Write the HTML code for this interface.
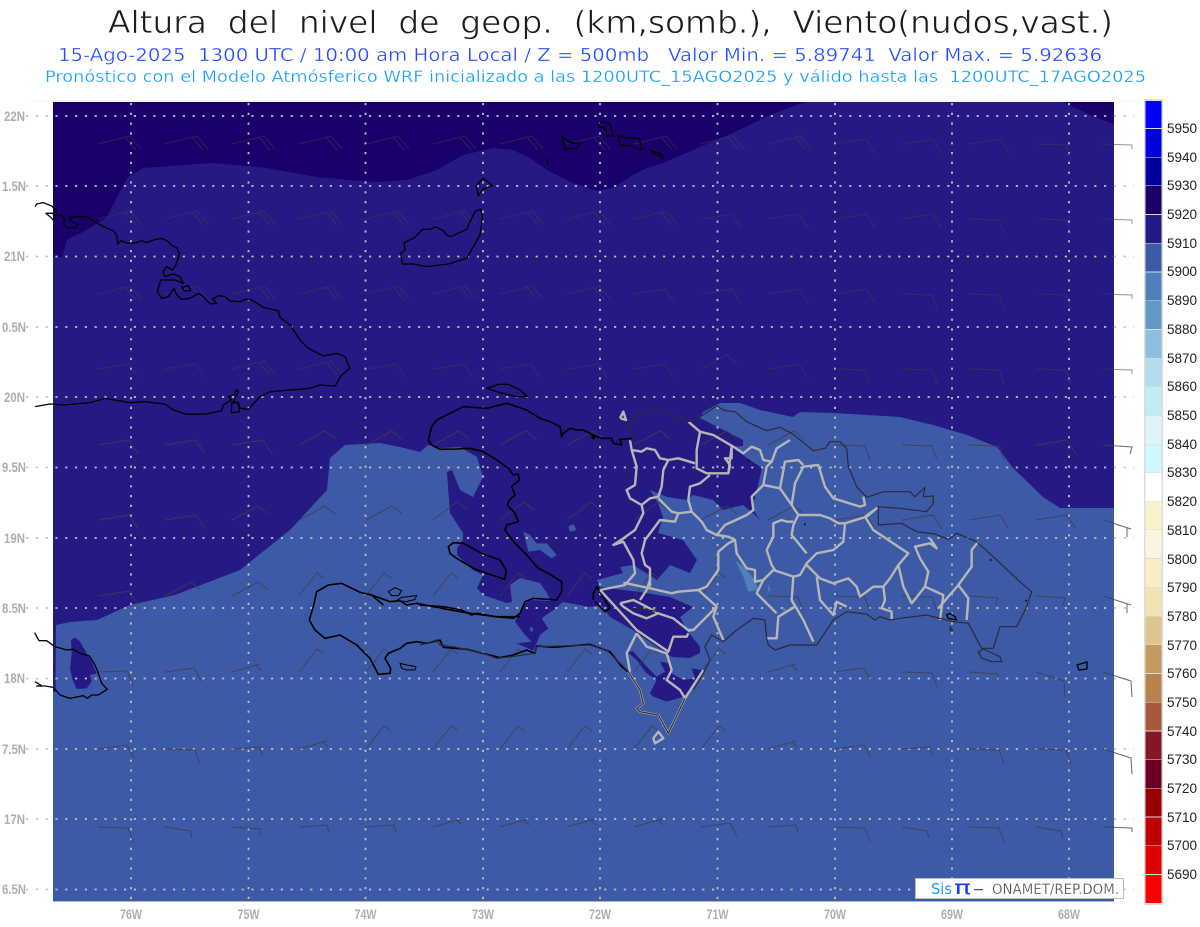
<!DOCTYPE html>
<html lang="es">
<head>
<meta charset="utf-8">
<title>Altura del nivel de geop.</title>
<style>
html,body{margin:0;padding:0;background:#fff;width:1200px;height:927px;overflow:hidden}
svg{display:block}
text{font-family:"Liberation Sans",sans-serif}
.tt{font-family:"DejaVu Sans",sans-serif;white-space:pre}
.k{fill:none;stroke:#000;stroke-width:1.3;stroke-linejoin:round;vector-effect:non-scaling-stroke}
.k2{fill:none;stroke:#2a2a3a;stroke-width:1.2;stroke-linejoin:round;vector-effect:non-scaling-stroke}
.g{fill:none;stroke:#b6b6b6;stroke-width:2.4;stroke-linejoin:round;vector-effect:non-scaling-stroke}
.b{fill:none;stroke:#3f3f4c;stroke-width:1}
.gr{fill:none;stroke:#c0c0c0;stroke-width:1.8;stroke-dasharray:2.2 7.6}
.lb{font-size:14px;fill:#aeaeae;font-weight:bold}
.cb{font-size:13.5px;fill:#222}
</style>
</head>
<body>
<svg width="1200" height="927" viewBox="0 0 1200 927" xmlns="http://www.w3.org/2000/svg">
<defs>
<path id="a" class="b" d="M0 0L32-8L43 5M27-7L38 6"/>
<path id="b" class="b" d="M0 0L31-5L40 9"/>
<path id="d" class="b" d="M0 0L30 1L35 15"/>
<path id="m" class="b" d="M0 0L29-1L35 13"/>
<path id="n" class="b" d="M0 0L29-4L36 9"/>
<path id="o" class="b" d="M0 0L28-8M24-7L29-2"/>
<path id="e" class="b" d="M0 0L26-14L36-6"/>
<path id="f" class="b" d="M0 0L24-18L34-10"/>
<path id="c" class="b" d="M0 0L18-23L25-18"/>
<path id="h" class="b" d="M0 0L25 4L27 11"/>
<path id="i" class="b" d="M0 0L29 2L27 9"/>
<path id="j" class="b" d="M0 0L28-2L30 6"/>
<path id="p" class="b" d="M0 0L29 1L29 5"/>
<path id="q" class="b" d="M0 0L28 9M24 8L24 17"/>
<path id="r" class="b" d="M0 0L28 9L29 25"/>
</defs>

<!-- Titles -->
<text class="tt" xml:space="preserve" x="108" y="33" font-size="31" fill="#1c1c1c" stroke="#fff" stroke-width=".7" textLength="1005" lengthAdjust="spacingAndGlyphs">Altura  del  nivel  de  geop.  (km,somb.),  Viento(nudos,vast.)</text>
<text class="tt" xml:space="preserve" x="58" y="61" font-size="17.5" fill="#2349ff" stroke="#fff" stroke-width=".35" textLength="1044" lengthAdjust="spacingAndGlyphs">15-Ago-2025  1300 UTC / 10:00 am Hora Local / Z = 500mb   Valor Min. = 5.89741  Valor Max. = 5.92636</text>
<text class="tt" xml:space="preserve" x="45" y="82" font-size="16" fill="#0f9dff" stroke="#fff" stroke-width=".3" textLength="1101" lengthAdjust="spacingAndGlyphs">Pronóstico con el Modelo Atmósferico WRF inicializado a las 1200UTC_15AGO2025 y válido hasta las  1200UTC_17AGO2025</text>

<!-- Map fills -->
<rect x="30" y="100.5" width="1110" height="1" fill="#f1f1f1"/>
<rect x="53" y="102" width="1061" height="799" fill="#3c5aa5"/>
<rect x="53" y="901" width="1061" height="1" fill="#a9b7dc"/>

<polygon fill="#251a84" points="53,102 1114,102 1114,508 1060,508 1043,497 1013,468 997,447 967,435 933,425 900,417 833,413 800,412 793,417 760,410 740,403 720,403 703,412 700,418 743,440 743,446 733,447 747,458 762,468 757,490 752,508 760,520 753,513 743,505 723,510 713,500 693,495 687,500 667,497 650,490 658,503 663,517 658,533 683,540 697,560 690,573 670,565 657,580 633,565 620,567 623,573 597,580 600,587 602,605 590,607 563,602 553,606 547,593 540,583 520,578 510,585 512,602 507,603 483,595 477,588 483,575 473,570 457,555 457,548 463,540 463,533 450,513 448,487 447,472 452,470 460,490 473,497 483,477 477,457 460,447 440,448 428,445 420,452 400,447 380,443 345,445 330,458 327,490 290,530 240,570 175,595 130,605 97,620 70,622 56,625 55.5,692 53,692"/>

<polygon fill="#19006b" points="53,102 805,102 770,115 735,132 700,147 663,163 647,168 633,175 613,188 597,191 573,183 547,170 530,158 513,150 493,148 463,155 437,170 407,180 380,182 360,181 317,177 267,168 213,163 143,168 128,177 117,197 107,217 87,230 67,240 62,257 53,257"/>
<polygon fill="#19006b" points="1062,102 1114,102 1114,124 1095,117"/>

<!-- indigo blobs -->
<polygon fill="#251a84" points="600,587 640,592 670,597 693,607 680,617 687,630 700,647 700,653 690,658 672,657 657,647 633,630 610,617 600,603"/>
<g transform="translate(420,380) scale(.33333)">
<polygon fill="#251a84" points="620,815 650,840 680,880 710,900 690,940 700,950 740,965 790,950 820,920 845,870 815,865 825,895 790,900 755,880 750,850 720,845 735,875 710,890 680,860 640,815"/>
<polygon fill="#3c5aa5" points="310,455 330,465 350,490 380,490 410,525 395,535 360,510 325,515"/>
<polygon fill="#3c5aa5" points="445,440 460,432 470,450 450,455"/>
</g>
<g transform="translate(300,560) scale(.33333)">
<polygon fill="#251a84" points="645,185 675,225 695,245 650,250 700,272 720,225 745,205 725,175 760,150 790,125 690,120 670,135"/>
<polygon fill="#3c5aa5" points="690,200 700,205 697,215 690,213"/>
</g>
<g transform="translate(30,620) scale(.33333)">
<polygon fill="#251a84" points="123,60 135,52 150,65 170,100 185,125 200,160 180,165 185,185 170,205 140,207 128,180 120,145 125,100"/>
</g>
<g transform="translate(600,390) scale(.33333)">
<polygon fill="#5080bb" points="405,510 430,530 465,570 475,600 445,605 430,560"/>
<polygon fill="#5080bb" points="505,580 512,600 505,605"/>
<polygon fill="#5080bb" points="548,650 560,660 548,665"/>
</g>

<!-- Grid -->
<g class="gr">
<path d="M26 116H1134M26 186H1134M26 256.500H1134M26 327H1134M26 397H1134M26 467.500H1134M26 538H1134M26 608H1134M26 678.500H1134M26 749H1134M26 819H1134M26 889.500H1134"/>
<path d="M131 103V905M248.500 103V905M365.500 103V905M483 103V905M600 103V905M717.500 103V905M835 103V905M952 103V905M1069 103V905"/>
</g>

<!-- Wind barbs: north rows faint over the dark fill -->
<g opacity=".55">
<g transform="translate(0,144)"><use href="#a" x="98"/><use href="#a" x="165"/><use href="#a" x="232"/><use href="#a" x="299"/><use href="#a" x="366"/><use href="#a" x="433"/><use href="#a" x="500"/><use href="#a" x="567"/><use href="#a" x="634"/><use href="#a" x="701"/><use href="#a" x="768"/><use href="#b" x="835"/><use href="#b" x="902"/><use href="#b" x="969"/><use href="#d" x="1036"/><use href="#p" x="1103"/></g>
<g transform="translate(0,219)"><use href="#a" x="98"/><use href="#a" x="165"/><use href="#a" x="232"/><use href="#a" x="299"/><use href="#a" x="366"/><use href="#a" x="433"/><use href="#a" x="500"/><use href="#a" x="567"/><use href="#a" x="634"/><use href="#b" x="701"/><use href="#b" x="768"/><use href="#b" x="835"/><use href="#b" x="902"/><use href="#d" x="969"/><use href="#d" x="1036"/><use href="#p" x="1103"/></g>
<g transform="translate(0,294)"><use href="#a" x="98"/><use href="#a" x="165"/><use href="#a" x="232"/><use href="#a" x="299"/><use href="#a" x="366"/><use href="#a" x="433"/><use href="#a" x="500"/><use href="#a" x="567"/><use href="#b" x="634"/><use href="#b" x="701"/><use href="#b" x="768"/><use href="#b" x="835"/><use href="#d" x="902"/><use href="#d" x="969"/><use href="#d" x="1036"/><use href="#p" x="1103"/></g>
<g transform="translate(0,369)"><use href="#b" x="98"/><use href="#b" x="165"/><use href="#a" x="232"/><use href="#a" x="299"/><use href="#b" x="366"/><use href="#b" x="433"/><use href="#b" x="500"/><use href="#b" x="567"/><use href="#b" x="634"/><use href="#e" x="701"/><use href="#b" x="768"/><use href="#d" x="835"/><use href="#d" x="902"/><use href="#d" x="969"/><use href="#d" x="1036"/><use href="#p" x="1103"/></g>
</g>
<g opacity=".8">
<g transform="translate(0,445)"><use href="#b" x="98"/><use href="#b" x="165"/><use href="#b" x="232"/><use href="#e" x="299"/><use href="#e" x="366"/><use href="#e" x="433"/><use href="#e" x="500"/><use href="#e" x="567"/><use href="#e" x="634"/><use href="#e" x="701"/><use href="#e" x="768"/><use href="#d" x="835"/><use href="#d" x="902"/><use href="#d" x="969"/><use href="#b" x="1036"/><use href="#i" x="1103"/></g>
<g transform="translate(0,520)"><use href="#b" x="98"/><use href="#b" x="165"/><use href="#e" x="232"/><use href="#e" x="299"/><use href="#e" x="366"/><use href="#f" x="433"/><use href="#f" x="500"/><use href="#f" x="567"/><use href="#f" x="634"/><use href="#e" x="701"/><use href="#e" x="768"/><use href="#b" x="835"/><use href="#b" x="902"/><use href="#b" x="969"/><use href="#b" x="1036"/><use href="#q" x="1103"/></g>
<g transform="translate(0,596)"><use href="#b" x="98"/><use href="#e" x="165"/><use href="#e" x="232"/><use href="#c" x="299"/><use href="#c" x="366"/><use href="#c" x="433"/><use href="#c" x="500"/><use href="#c" x="567"/><use href="#c" x="634"/><use href="#c" x="701"/><use href="#d" x="768"/><use href="#d" x="835"/><use href="#d" x="902"/><use href="#i" x="969"/><use href="#i" x="1036"/><use href="#q" x="1103"/></g>
<g transform="translate(0,672)"><use href="#m" x="98"/><use href="#n" x="165"/><use href="#o" x="232"/><use href="#c" x="299"/><use href="#c" x="366"/><use href="#c" x="433"/><use href="#c" x="500"/><use href="#c" x="567"/><use href="#c" x="634"/><use href="#c" x="701"/><use href="#o" x="768"/><use href="#n" x="835"/><use href="#d" x="902"/><use href="#i" x="969"/><use href="#r" x="1036"/><use href="#r" x="1103"/></g>
<g transform="translate(0,749)"><use href="#n" x="98"/><use href="#d" x="165"/><use href="#j" x="232"/><use href="#o" x="299"/><use href="#c" x="366"/><use href="#c" x="433"/><use href="#c" x="500"/><use href="#c" x="567"/><use href="#c" x="634"/><use href="#c" x="701"/><use href="#o" x="768"/><use href="#n" x="835"/><use href="#j" x="902"/><use href="#d" x="969"/><use href="#d" x="1036"/><use href="#r" x="1103"/></g>
<g transform="translate(0,827)"><use href="#d" x="98"/><use href="#h" x="165"/><use href="#i" x="232"/><use href="#j" x="299"/><use href="#j" x="366"/><use href="#o" x="433"/><use href="#o" x="500"/><use href="#o" x="567"/><use href="#o" x="634"/><use href="#n" x="701"/><use href="#j" x="768"/><use href="#d" x="835"/><use href="#h" x="902"/><use href="#d" x="969"/><use href="#h" x="1036"/><use href="#p" x="1103"/></g>
</g>

<!-- Cuba -->
<g transform="translate(0,100) scale(.33333)">
<polyline class="k" points="105,320 110,312 130,308 155,318 170,332 160,340 138,340 150,350 165,365 160,345 185,345 195,360 190,372 200,383 225,383 235,373 215,365 207,353 225,350 260,350 285,365 310,380 340,392 350,405 353,432 362,422 385,430 410,428 425,422 440,428 460,420 485,415 505,425 515,437 530,443 538,460 530,490 518,510 500,500 488,515 495,530 520,522 540,530 550,550 525,540 482,540 472,575 485,595 505,590 522,565 530,585 545,598 570,595 595,580 610,590 630,612 650,610 638,597 655,587 675,590 690,603 720,605 735,598 755,600 790,622 835,632 840,652 870,675 900,720 925,745 970,768 1010,760 1035,770 1050,805 1025,825 1005,858 960,855 930,865 810,875 780,890 745,928 720,925 715,908 700,905 715,875 710,868 700,885 685,890 695,900 670,915 665,932 620,942 560,943 520,930 495,912 430,905 390,908 315,895 270,908 190,915 150,912 105,920"/>
<polygon class="k" points="545,562 565,557 572,572 553,573"/>
<polygon class="k" points="695,908 715,908 718,936 694,938"/>
</g>

<!-- Bahamas / Turks -->
<g transform="translate(380,100) scale(.33333)">
<polygon class="k" points="62,460 75,450 72,428 105,412 128,388 150,388 167,380 190,392 200,405 212,410 260,388 270,365 285,335 302,327 307,350 300,405 260,475 205,492 140,500 100,492 67,492"/>
<polygon class="k" points="288,258 310,235 338,257 310,267 295,287"/>
<polyline class="k" points="500,175 505,197"/>
<polygon class="k" points="545,107 570,128 600,130 590,145 555,147"/>
<polygon class="k" points="665,65 690,70 695,90 700,108 680,108 678,85 655,80"/>
<polygon class="k" points="715,107 735,113 778,115 780,125 785,150 755,138 720,135"/>
<polygon class="k" points="808,150 845,162 850,177"/>
</g>

<!-- Jamaica -->
<g transform="translate(30,620) scale(.33333)">
<polyline class="k" points="14,38 27,62 50,62 75,80 110,90 130,88 150,100 178,108 195,135 205,160 215,190 232,208 205,225 185,225 172,235 160,227 120,235 90,225 70,202 45,198 20,198 35,197 15,185"/>
</g>

<!-- Haiti -->
<g transform="translate(420,380) scale(.33333)">
<polygon class="k" points="200,25 235,13 265,13 300,30 322,50 290,50 240,38"/>
<polyline class="k" style="stroke-width:1.6" points="640,175 600,178 605,195 580,190 575,175 545,175 520,165 490,150 470,150 450,145 430,160 425,170 420,140 390,125 360,115 320,90 260,70 200,85 130,80 90,100 50,120 35,140 25,180 35,195 60,208 110,207 150,205 190,215 230,240 265,265 280,285 295,282 298,300 275,320 285,345 268,360 262,375 285,400 295,425 260,435 255,450 285,490 320,525 355,565 385,580 425,605 425,635 410,660 340,655 315,665 300,700 280,715 225,710 170,700 155,705 125,690 70,680 0,675"/>
<polygon class="k" style="stroke-width:1.6" points="85,500 100,488 130,490 185,520 240,540 258,570 255,598 215,585 160,565 110,535 90,520"/>
<polyline class="k" style="stroke-width:1.6" points="520,660 520,640 530,620 570,685 555,695 525,665"/>
<circle cx="520" cy="172" r="6" fill="#000"/>
<circle cx="595" cy="185" r="6" fill="none" stroke="#000"/>
</g>
<g transform="translate(300,560) scale(.33333)">
<polyline class="k" style="stroke-width:1.6" points="250,135 215,105 180,97 125,70 85,75 50,95 40,140 28,180 45,210 75,235 120,225 170,255 210,295 235,343 270,340 272,325 255,295 265,280 300,265 320,250 350,245 380,250 420,240 430,262 500,268 600,293 640,285 680,270 705,280 710,258 760,262 870,253 930,275 965,320 990,340"/>
<polyline class="k" style="stroke-width:1.6" points="660,170 590,170 510,160 440,148 350,130 320,135 300,122 270,125 215,105"/>
<polygon class="k" style="stroke-width:1" points="265,95 285,83 305,92 295,107 275,107"/>
<polygon class="k" style="stroke-width:1" points="290,122 305,112 350,107 345,118 320,125"/>
<polygon class="k" style="stroke-width:1" points="300,310 320,315 348,320 345,330 320,330 305,325"/>
</g>

<!-- Dominican Republic provinces (grey) -->
<g transform="translate(600,390) scale(.33333)">
<polyline class="g" points="90,150 95,180 110,230 105,285 80,300 90,325 125,345 130,370 105,420 70,445 40,465 70,455 100,510 105,550 75,585 0,600"/>
<polyline class="g" points="265,95 300,125 340,135 400,170 430,190 455,170 480,180 490,210 515,215 530,175 570,150"/>
<polyline class="g" points="300,125 290,180 290,235 320,250 385,250 395,170 395,205 375,205 390,225 385,250"/>
<polyline class="g" points="95,180 125,185 140,175 165,180 180,205 205,210 235,205 285,220"/>
<polyline class="g" points="205,210 190,240 185,290 175,320 150,325 125,345"/>
<polyline class="g" points="330,255 300,280 270,290 265,330 275,365 235,370 225,395 180,390 135,450 125,490 135,525 150,535 150,590"/>
<polyline class="g" points="175,325 215,365 235,370"/>
<polyline class="g" points="275,365 305,395 320,420 350,435 375,405 440,375 460,360 455,320 490,285 500,230 515,215"/>
<polyline class="g" points="350,435 385,440 405,450 410,490 440,535 465,540 465,575 490,570 520,540 580,560 600,555 620,520 650,490 700,480 730,455 735,400 715,400 690,385 660,375 595,375 575,345 585,280 610,230 655,225 675,290 700,325 780,350 795,345 790,320"/>
<polyline class="g" points="595,375 580,405 575,435 620,490"/>
<polyline class="g" points="580,395 560,395 545,390 520,400 520,440 500,480 515,525 525,540"/>
<polyline class="g" points="490,285 540,295 555,215 595,210 610,225"/>
<polyline class="g" points="540,295 575,345"/>
<polyline class="g" points="735,400 800,380 830,355 795,380 820,420 925,490 895,525 870,565 850,590 820,590 780,620 770,590 745,565 700,580 660,565 620,525"/>
<polyline class="g" points="650,560 660,630 700,675 710,635 740,650"/>
<polyline class="g" points="895,525 910,590 935,640 975,590 985,545 960,505 945,470 990,460 1010,475 990,445"/>
<polyline class="g" points="975,590 1030,615 1020,690"/>
<polyline class="g" points="1015,655 1075,585 1105,625 1100,690"/>
<polyline class="g" points="1075,585 1115,530 1115,480 1135,455"/>
<polyline class="g" points="850,590 855,630 845,655 875,665 875,690"/>
<polyline class="g" points="580,560 575,630 610,690 640,755"/>
<polyline class="g" points="575,630 585,650 535,680 530,745 500,745"/>
<polyline class="g" points="490,570 470,610 530,670"/>
<polyline class="g" points="405,450 385,460 355,485 355,540 320,590 295,600 350,650 340,680 370,750"/>
<polyline class="g" points="295,600 235,605 215,610 150,595 70,578"/>
<polyline class="g" points="350,650 280,720 265,720"/>
<polyline class="g" points="60,85 70,65 78,90 62,85"/>
</g>
<g transform="translate(420,380) scale(.33333)">
<polyline class="g" points="540,630 600,695 650,750 745,815 760,770 800,770 805,760"/>
<polyline class="g" points="650,760 620,820 630,875"/>
<polyline class="g" points="650,760 680,800 740,820 755,870 740,900 780,930 795,955"/>
<polyline class="g" points="810,755 760,715 715,700"/>
<polyline class="g" points="600,670 640,660 680,680 715,700 680,715 640,700 610,680 600,670"/>
<polyline class="g" points="660,660 680,630 690,600"/>
<polyline class="g" points="625,875 660,930 670,970 650,985 660,995 715,1005 745,1060 795,955 850,870"/>
<polygon class="g" points="700,1075 715,1055 730,1075 705,1090"/>
<polyline class="k2" points="630,685 670,687 715,695"/>
</g>

<!-- DR coast -->
<g transform="translate(600,390) scale(.33333)">
<polyline class="k2" points="90,150 100,148 85,100 120,68 160,57 195,62 265,95 300,80 350,48 375,62 405,65 440,95 500,122 540,112 575,130 640,182 675,175 690,155 720,155 740,175 745,230 770,290 800,322 850,305 930,305 945,320 975,292 970,320 1000,318 1000,340 980,365 900,355 835,350 835,405 905,400 950,425 1005,432 1045,448 1070,430 1130,455 1190,510 1265,580 1295,605 1280,650 1250,710 1200,710 1180,775 1145,775 1105,700 1060,695 980,675 900,685 870,690 840,680 825,690 800,672 740,665 700,690 650,765 570,765 525,780 505,765 500,745 495,690 460,685 410,720 370,755 335,735 315,770 330,810 310,850 280,900"/>
<polygon class="k2" points="1135,785 1150,777 1200,800 1205,815 1175,815 1145,805"/>
<polygon class="k" points="1040,675 1050,670 1065,680 1070,690 1045,685"/>
<polygon class="k2" points="1050,710 1058,720 1050,722"/>
<circle cx="1172" cy="510" r="3" fill="#111"/><circle cx="1278" cy="632" r="3" fill="#111"/><circle cx="615" cy="403" r="3" fill="#111"/><circle cx="444" cy="213" r="3" fill="#111"/>
</g>
<g transform="translate(420,380) scale(.33333)">
<polyline class="k2" points="795,955 745,1060 715,1005 660,995 650,985 670,970 660,930 625,875 600,850 560,810 510,795 350,800 345,820 275,830 230,835 190,820 100,800 60,795 50,780 20,790 0,795"/>
</g>
<polygon class="k" points="1077,665 1087,662 1087,669 1079,670"/>

<!-- Lat labels -->
<g class="lb">
<text x="4" y="121" textLength="21" lengthAdjust="spacingAndGlyphs">22N</text>
<text x="2" y="191" textLength="24" lengthAdjust="spacingAndGlyphs">1.5N</text>
<text x="4" y="261" textLength="21" lengthAdjust="spacingAndGlyphs">21N</text>
<text x="2" y="332" textLength="24" lengthAdjust="spacingAndGlyphs">0.5N</text>
<text x="4" y="402" textLength="21" lengthAdjust="spacingAndGlyphs">20N</text>
<text x="2" y="472" textLength="24" lengthAdjust="spacingAndGlyphs">9.5N</text>
<text x="4" y="543" textLength="21" lengthAdjust="spacingAndGlyphs">19N</text>
<text x="2" y="613" textLength="24" lengthAdjust="spacingAndGlyphs">8.5N</text>
<text x="4" y="683" textLength="21" lengthAdjust="spacingAndGlyphs">18N</text>
<text x="2" y="754" textLength="24" lengthAdjust="spacingAndGlyphs">7.5N</text>
<text x="4" y="824" textLength="21" lengthAdjust="spacingAndGlyphs">17N</text>
<text x="2" y="894" textLength="24" lengthAdjust="spacingAndGlyphs">6.5N</text>
</g>
<g class="lb">
<text x="120" y="919" textLength="22" lengthAdjust="spacingAndGlyphs">76W</text>
<text x="237.500" y="919" textLength="22" lengthAdjust="spacingAndGlyphs">75W</text>
<text x="354.500" y="919" textLength="22" lengthAdjust="spacingAndGlyphs">74W</text>
<text x="472" y="919" textLength="22" lengthAdjust="spacingAndGlyphs">73W</text>
<text x="589" y="919" textLength="22" lengthAdjust="spacingAndGlyphs">72W</text>
<text x="706.500" y="919" textLength="22" lengthAdjust="spacingAndGlyphs">71W</text>
<text x="824" y="919" textLength="22" lengthAdjust="spacingAndGlyphs">70W</text>
<text x="941" y="919" textLength="22" lengthAdjust="spacingAndGlyphs">69W</text>
<text x="1058" y="919" textLength="22" lengthAdjust="spacingAndGlyphs">68W</text>
</g>

<!-- Legend box -->
<rect x="915.500" y="878.500" width="208" height="20" fill="#fff" stroke="#bdbdbd"/>
<text class="tt" x="931" y="894" font-size="15" fill="#1e96ff" textLength="21" lengthAdjust="spacingAndGlyphs">Sis</text>
<text class="tt" x="954" y="894" font-size="19" fill="#1a3cff" textLength="17" lengthAdjust="spacingAndGlyphs">π</text>
<rect x="974" y="889" width="9" height="1.2" fill="#555"/>
<text class="tt" x="992" y="894" font-size="14" fill="#555" stroke="#fff" stroke-width=".2" textLength="127" lengthAdjust="spacingAndGlyphs">ONAMET/REP.DOM.</text>

<!-- Colour bar -->
<rect x="1144" y="99" width="19" height="806" fill="#dcdcdc"/>
<g>
<rect x="1145.500" y="101" width="16" height="27" fill="#0000ff"/>
<rect x="1145.500" y="129" width="16" height="28" fill="#0000dd"/>
<rect x="1145.500" y="157.500" width="16" height="28" fill="#00009b"/>
<rect x="1145.500" y="186" width="16" height="28" fill="#19006b"/>
<rect x="1145.500" y="215" width="16" height="28" fill="#251a84"/>
<rect x="1145.500" y="243.500" width="16" height="28" fill="#3c5aa5"/>
<rect x="1145.500" y="272.500" width="16" height="28" fill="#5080bb"/>
<rect x="1145.500" y="301" width="16" height="28" fill="#6399c9"/>
<rect x="1145.500" y="330" width="16" height="28" fill="#8dbde0"/>
<rect x="1145.500" y="358.500" width="16" height="28" fill="#b0dcec"/>
<rect x="1145.500" y="387" width="16" height="28" fill="#c2ecf3"/>
<rect x="1145.500" y="416" width="16" height="28" fill="#def4f9"/>
<rect x="1145.500" y="444.500" width="16" height="28" fill="#ccf9fd"/>
<rect x="1145.500" y="473" width="16" height="28" fill="#ffffff"/>
<rect x="1145.500" y="501.500" width="16" height="28" fill="#faf3ca"/>
<rect x="1145.500" y="530" width="16" height="28" fill="#fbf5e0"/>
<rect x="1145.500" y="559" width="16" height="28" fill="#f8eec4"/>
<rect x="1145.500" y="588" width="16" height="28" fill="#f0e3b5"/>
<rect x="1145.500" y="616.500" width="16" height="28" fill="#e0c48d"/>
<rect x="1145.500" y="645" width="16" height="28" fill="#c49a60"/>
<rect x="1145.500" y="674" width="16" height="28" fill="#bb814d"/>
<rect x="1145.500" y="702.500" width="16" height="28" fill="#a5583a"/>
<rect x="1145.500" y="731.500" width="16" height="28" fill="#851725"/>
<rect x="1145.500" y="760" width="16" height="28" fill="#6a0020"/>
<rect x="1145.500" y="788.500" width="16" height="28" fill="#950000"/>
<rect x="1145.500" y="817.500" width="16" height="28" fill="#bf0000"/>
<rect x="1145.500" y="846" width="16" height="28" fill="#e00000"/>
<rect x="1145.500" y="875" width="16" height="28" fill="#ff0000"/>
</g>
<g class="cb">
<text x="1167" y="133">5950</text><text x="1167" y="162">5940</text><text x="1167" y="190">5930</text><text x="1167" y="219">5920</text><text x="1167" y="248">5910</text><text x="1167" y="276">5900</text><text x="1167" y="305">5890</text><text x="1167" y="334">5880</text><text x="1167" y="363">5870</text><text x="1167" y="391">5860</text><text x="1167" y="420">5850</text><text x="1167" y="449">5840</text><text x="1167" y="477">5830</text><text x="1167" y="506">5820</text><text x="1167" y="535">5810</text><text x="1167" y="564">5800</text><text x="1167" y="592">5790</text><text x="1167" y="621">5780</text><text x="1167" y="650">5770</text><text x="1167" y="678">5760</text><text x="1167" y="707">5750</text><text x="1167" y="736">5740</text><text x="1167" y="764">5730</text><text x="1167" y="793">5720</text><text x="1167" y="822">5710</text><text x="1167" y="850">5700</text><text x="1167" y="879">5690</text>
</g>
</svg>
</body>
</html>
